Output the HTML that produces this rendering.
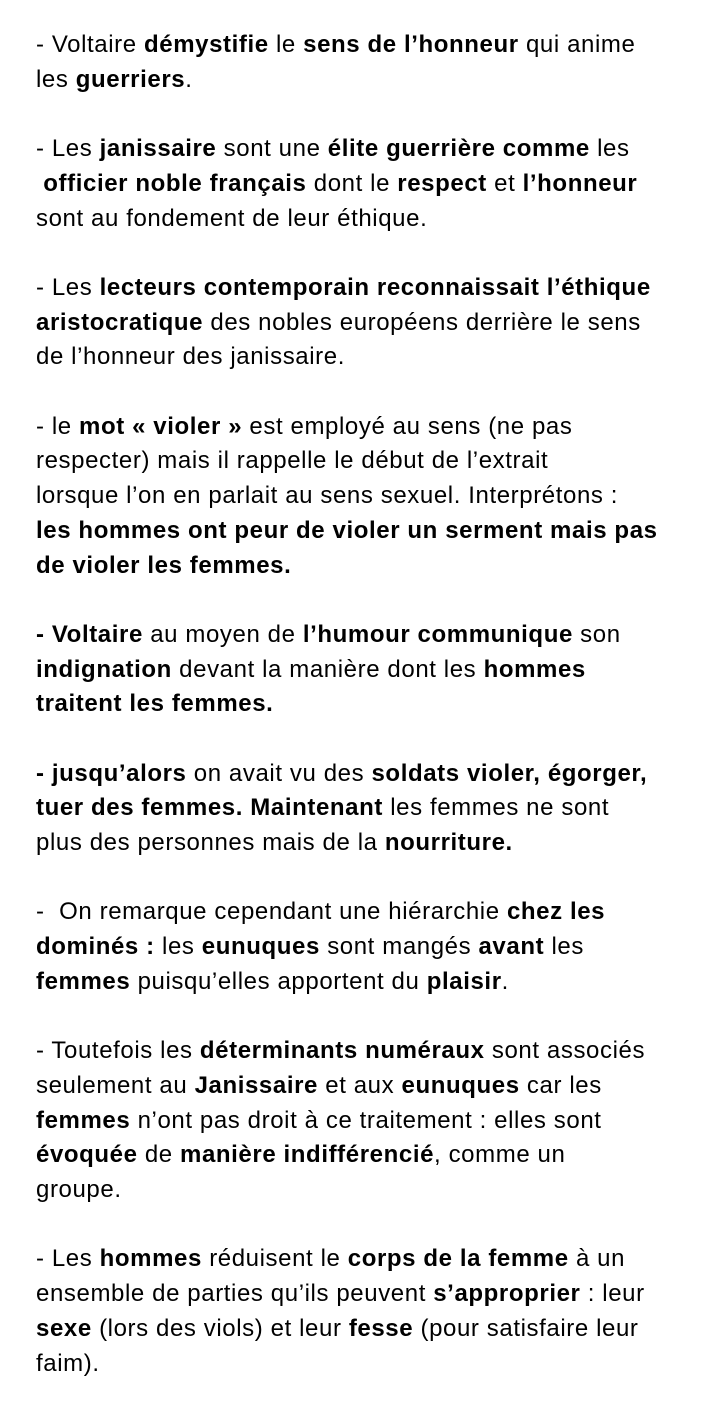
<!DOCTYPE html>
<html><head><meta charset="utf-8">
<style>
html,body{margin:0;padding:0;background:#fff;}
body{width:718px;height:1400px;overflow:hidden;}
.c{position:absolute;left:36px;top:28px;font-family:"Liberation Sans",Arial,sans-serif;font-size:24px;letter-spacing:0.6px;line-height:34.7px;color:#000;white-space:nowrap;}
p{margin:0 0 34.7px 0;}
b{font-weight:bold;}
</style></head><body>
<div class="c">
<p>- Voltaire <b>démystifie</b> le <b>sens de l’honneur</b> qui anime<br>les <b>guerriers</b>.</p>
<p>- Les <b>janissaire</b> sont une <b>élite guerrière comme</b> les<br>&nbsp;<b>officier noble français</b> dont le <b>respect</b> et <b>l’honneur</b><br>sont au fondement de leur éthique.</p>
<p>- Les <b>lecteurs contemporain reconnaissait l’éthique</b><br><b>aristocratique</b> des nobles européens derrière le sens<br>de l’honneur des janissaire.</p>
<p>- le <b>mot « violer »</b> est employé au sens (ne pas<br>respecter) mais il rappelle le début de l’extrait<br>lorsque l’on en parlait au sens sexuel. Interprétons :<br><b>les hommes ont peur de violer un serment mais pas</b><br><b>de violer les femmes.</b></p>
<p><b>- Voltaire</b> au moyen de <b>l’humour communique</b> son<br><b>indignation</b> devant la manière dont les <b>hommes</b><br><b>traitent les femmes.</b></p>
<p><b>- jusqu’alors</b> on avait vu des <b>soldats violer, égorger,</b><br><b>tuer des femmes. Maintenant</b> les femmes ne sont<br>plus des personnes mais de la <b>nourriture.</b></p>
<p>-&nbsp; On remarque cependant une hiérarchie <b>chez les</b><br><b>dominés :</b> les <b>eunuques</b> sont mangés <b>avant</b> les<br><b>femmes</b> puisqu’elles apportent du <b>plaisir</b>.</p>
<p>- Toutefois les <b>déterminants numéraux</b> sont associés<br>seulement au <b>Janissaire</b> et aux <b>eunuques</b> car les<br><b>femmes</b> n’ont pas droit à ce traitement : elles sont<br><b>évoquée</b> de <b>manière indifférencié</b>, comme un<br>groupe.</p>
<p>- Les <b>hommes</b> réduisent le <b>corps de la femme</b> à un<br>ensemble de parties qu’ils peuvent <b>s’approprier</b> : leur<br><b>sexe</b> (lors des viols) et leur <b>fesse</b> (pour satisfaire leur<br>faim).</p>
</div>
</body></html>
